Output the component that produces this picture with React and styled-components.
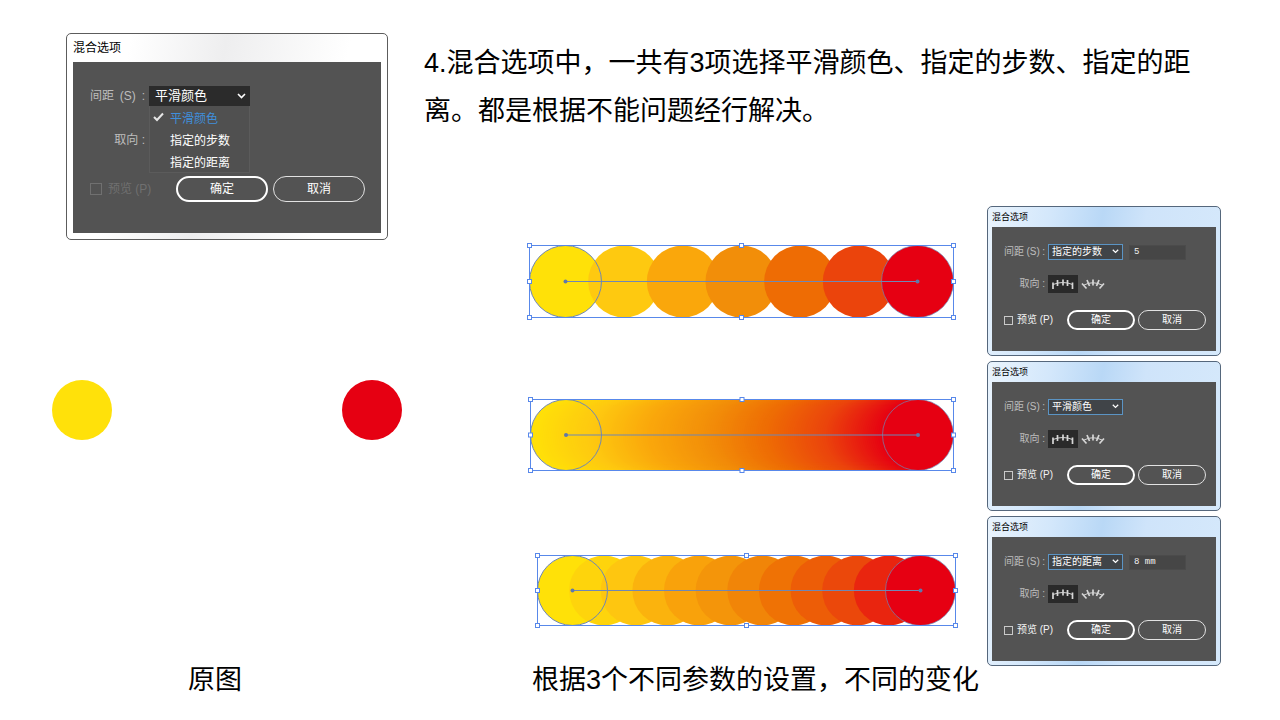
import { useId } from 'react';
import styled, { createGlobalStyle, ThemeProvider } from 'styled-components';

const GlobalStyle = createGlobalStyle`
  * {
    box-sizing: border-box;
  }
  body {
    margin: 0;
    background: #fff;
    color: #000;
    font-family: "Liberation Sans", "Noto Sans CJK SC", sans-serif;
  }
  button, input, select {
    margin: 0;
    font-family: inherit;
  }
`;

const large = {
  font: 12,
  frame: 'linear-gradient(100deg, #fff 0%, #fff 18%, #eeeeef 45%, #fff 80%)',
  frameBorder: '#5c5c5c',
  titleHeight: 28,
  edge: 6,
  body: '24px 10px 31px 17px',
  gaps: [24, 26],
  labelWidth: 55,
  labelGap: 4,
  rowHeight: 20,
  selectWidth: 101,
  selectBg: '#2b2b2b',
  selectBorder: '#2b2b2b',
  checkWidth: 86,
  check: 12,
  checkGap: 6,
  button: [92, 26],
  buttonGap: 5,
};

const small = {
  font: 10,
  frame: 'linear-gradient(100deg, #eaf4fd 0%, #d3e7fb 25%, #b9d8f6 45%, #cfe4fa 62%, #d6e9fb 100%)',
  frameBorder: '#55677c',
  titleHeight: 20,
  edge: 4,
  body: '17px 5px 21px 12px',
  gaps: [14, 16],
  labelWidth: 41,
  labelGap: 3,
  rowHeight: 16,
  selectWidth: 75,
  selectBg: '#404448',
  selectBorder: '#5b94c4',
  checkWidth: 63,
  check: 9,
  checkGap: 4,
  button: [68, 20],
  buttonGap: 3,
};

const Page = styled.main`
  display: grid;
  grid-template-columns: 350px 1fr;
  column-gap: 22px;
  min-height: 100vh;
  padding: 33px 59px 26px 52px;
`;
const Original = styled.section`
  display: flex;
  flex-direction: column;
  align-items: center;
`;
const Results = styled.section`
  display: flex;
  flex-direction: column;
`;
const Intro = styled.p`
  margin: 0 0 71px;
  padding: 6px 20px 0 0;
  font-size: 27px;
  line-height: 48px;
`;
const Caption = styled.p`
  margin: auto 0 0;
  padding: ${props => props.$inset};
  font-size: 27px;
  line-height: 28px;
`;
const ResultList = styled.div`
  display: flex;
  flex-direction: column;
  gap: 5px;
`;
const ResultRow = styled.div`
  display: flex;
  align-items: center;
  justify-content: space-between;
  padding-left: 100px;
`;
const Swatches = styled.div`
  display: flex;
  justify-content: space-between;
  width: 100%;
  margin-top: 140px;
`;
const Swatch = styled.span`
  width: 60px;
  height: 60px;
  border-radius: 50%;
  background: ${props => props.$color};
`;

const Frame = styled.form`
  flex: none;
  width: ${props => (props.theme.font === 12 ? 322 : 234)}px;
  padding: 0 ${props => props.theme.edge}px ${props => props.theme.edge}px;
  border: 1px solid ${props => props.theme.frameBorder};
  border-radius: 5px;
  background: ${props => props.theme.frame};
  font-size: ${props => props.theme.font}px;
`;
const TitleBar = styled.h2`
  margin: 0;
  font-size: ${props => (props.theme.font === 12 ? 12 : 9)}px;
  font-weight: normal;
  line-height: ${props => props.theme.titleHeight}px;
`;
const Body = styled.div`
  padding: ${props => props.theme.body};
  background: #535353;
  color: #f2f2f2;
`;
const Row = styled.div`
  display: flex;
  align-items: center;
  height: ${props => props.$height}px;
  margin-top: ${props => props.$gap || 0}px;
`;
const Label = styled.label`
  display: flex;
  align-items: baseline;
  justify-content: ${props => (props.$spread ? 'space-between' : 'flex-end')};
  width: ${props => props.theme.labelWidth}px;
  margin-right: ${props => props.theme.labelGap}px;
  color: #bdbdbd;
  line-height: 14px;
  white-space: pre;
`;
const SelectWrap = styled.div`
  position: relative;
  width: ${props => props.theme.selectWidth}px;
  height: ${props => props.theme.rowHeight}px;
`;
const Select = styled.select`
  display: block;
  width: 100%;
  height: 100%;
  padding: 0 0 0 ${props => (props.theme.font === 12 ? 5 : 3)}px;
  appearance: none;
  border: 1px solid ${props => props.theme.selectBorder};
  border-radius: 0;
  background: ${props => props.theme.selectBg};
  color: #fff;
  font-size: ${props => (props.theme.font === 12 ? 13 : 10)}px;
  line-height: 14px;
`;
const Chevron = styled.svg`
  position: absolute;
  top: 50%;
  right: 4px;
  width: ${props => (props.theme.font === 12 ? 9 : 7)}px;
  margin-top: -3px;
  pointer-events: none;
`;
const Menu = styled.ul`
  position: absolute;
  top: 100%;
  left: 0;
  width: 100%;
  margin: 0;
  padding: 0;
  border: 1px solid #5b5b5b;
  border-top: 0;
  background: #505050;
  list-style: none;
`;
const MenuItem = styled.li`
  display: flex;
  align-items: center;
  gap: 6px;
  height: 22px;
  padding-left: 3px;
  color: ${props => (props.$active ? '#3f8fdc' : '#fff')};
`;
const Tick = styled.svg`
  flex: none;
  width: 11px;
  height: 10px;
  visibility: ${props => (props.$shown ? 'visible' : 'hidden')};
`;
const NumberField = styled.input`
  width: 57px;
  height: 15px;
  margin-left: 6px;
  padding: 0 0 0 4px;
  border: 1px solid #4b4b4b;
  border-radius: 0;
  background: #464646;
  color: #f2f2f2;
  && {
    font-family: "Liberation Mono", monospace;
  }
  font-size: 9px;
`;
const OrientButton = styled.button`
  width: 30px;
  height: 18px;
  padding: 0;
  border: 0;
  background: ${props => (props.$on ? '#2a2a2a' : 'transparent')};
  svg {
    display: block;
    margin: 0 auto;
  }
`;
const Preview = styled.label`
  display: flex;
  flex: none;
  align-items: center;
  gap: ${props => props.theme.checkGap}px;
  width: ${props => props.theme.checkWidth}px;
  color: ${props => (props.$off ? '#707070' : '#f2f2f2')};
  line-height: 14px;
  white-space: pre;
`;
const Checkbox = styled.input`
  flex: none;
  width: ${props => props.theme.check}px;
  height: ${props => props.theme.check}px;
  appearance: none;
  border: 1px solid ${props => (props.disabled ? '#707070' : '#c9c9c9')};
`;
const PillButton = styled.button`
  flex: none;
  width: ${props => props.theme.button[0]}px;
  height: ${props => props.theme.button[1]}px;
  margin-right: ${props => props.theme.buttonGap}px;
  padding: 0;
  border: ${props => (props.$primary ? 2 : 1)}px solid ${props => (props.$primary ? '#fff' : '#e2e2e2')};
  border-radius: 14px;
  background: transparent;
  color: #fff;
  font-size: inherit;
  line-height: 14px;
`;
const Art = styled.svg`
  display: block;
  flex: none;
  width: 436px;
  height: 80px;
`;

const modes = ['平滑颜色', '指定的步数', '指定的距离'];

function AlignPageIcon() {
  return (
    <svg width="24" height="12" viewBox="0 0 24 12" fill="none" stroke="#d6d6d6" strokeWidth="1.7">
      <path d="M2 4.500v6.500M6.500 2v6M12 1.500v6M16.500 2v6M21.500 4.500v6.500" />
      <path d="M2 6.500Q12 2.500 21.500 6.500" strokeWidth="1" />
    </svg>
  );
}

function AlignPathIcon() {
  return (
    <svg width="24" height="12" viewBox="0 0 24 12" fill="none" stroke="#d6d6d6" strokeWidth="1.7">
      <path d="M1 5.500l4.500 5M6 2l2.500 6M12 1.500v6M18 2l-2.500 6M23 5.500l-4.500 5" />
      <path d="M3 7Q12 2.500 21 7" strokeWidth="1" />
    </svg>
  );
}

function BlendDialog({ size, mode, value, open }) {
  const id = useId();
  return (
    <ThemeProvider theme={size}>
      <Frame onSubmit={e => e.preventDefault()}>
        <TitleBar>混合选项</TitleBar>
        <Body>
          <Row $height={size.rowHeight}>
            <Label htmlFor={`${id}mode`} $spread>
              <span>间距</span>
              <span>(S)</span>
              <span>:</span>
            </Label>
            <SelectWrap>
              <Select id={`${id}mode`} defaultValue={mode}>
                {modes.map(item => (
                  <option key={item}>{item}</option>
                ))}
              </Select>
              <Chevron viewBox="0 0 9 6" fill="none" stroke="#fff" strokeWidth="1.6">
                <path d="M1 1l3.500 3.500L8 1" />
              </Chevron>
              {open ? (
                <Menu role="listbox">
                  {modes.map(item => (
                    <MenuItem key={item} role="option" aria-selected={item === mode} $active={item === mode}>
                      <Tick $shown={item === mode} viewBox="0 0 11 10" fill="none" stroke="#e6e6e6" strokeWidth="2">
                        <path d="M1 5l3 3 6-6.500" />
                      </Tick>
                      {item}
                    </MenuItem>
                  ))}
                </Menu>
              ) : null}
            </SelectWrap>
            {value ? <NumberField aria-label={mode} defaultValue={value} /> : null}
          </Row>
          <Row $height={20} $gap={size.gaps[0]}>
            <Label as="span">取向 :</Label>
            {!open ? (
              <>
                <OrientButton type="button" aria-label="对齐页面" $on>
                  <AlignPageIcon />
                </OrientButton>
                <OrientButton type="button" aria-label="对齐路径">
                  <AlignPathIcon />
                </OrientButton>
              </>
            ) : null}
          </Row>
          <Row $height={size.button[1]} $gap={size.gaps[1]}>
            <Preview $off={open}>
              <Checkbox type="checkbox" disabled={open} />
              预览 (P)
            </Preview>
            <PillButton type="submit" $primary>确定</PillButton>
            <PillButton type="button">取消</PillButton>
          </Row>
        </Body>
      </Frame>
    </ThemeProvider>
  );
}

const ramp = [
  [255, 225, 8],
  [254, 201, 16],
  [250, 167, 11],
  [242, 142, 9],
  [238, 108, 4],
  [235, 68, 12],
  [230, 0, 18],
];

function rampColor(t) {
  const pos = t * (ramp.length - 1);
  const i = Math.min(Math.floor(pos), ramp.length - 2);
  const mix = ramp[i].map((c, n) => Math.round(c + (ramp[i + 1][n] - c) * (pos - i)));
  return `rgb(${mix.join(',')})`;
}

// from / to are the centres of the two key circles
function Blend({ count, from, to, r, cy, label }) {
  const left = from - r;
  const right = to + r;
  const top = cy - r;
  const bottom = cy + r;
  const mid = (left + right) / 2;
  const handles = [
    [left, top], [mid, top], [right, top],
    [left, cy], [right, cy],
    [left, bottom], [mid, bottom], [right, bottom],
  ];
  return (
    <Art viewBox="0 0 436 80" role="img" aria-label={label}>
      {Array.from({ length: count }, (_, i) => {
        const t = i / (count - 1);
        return <circle key={i} cx={from + (to - from) * t} cy={cy} r={r} fill={rampColor(t)} />;
      })}
      <g fill="none" stroke="#6f87b5">
        <circle cx={from} cy={cy} r={r} />
        <circle cx={to} cy={cy} r={r} strokeOpacity="0.7" />
        <path d={`M${from} ${cy}H${to}`} />
      </g>
      <rect x={left} y={top} width={right - left} height={r * 2} fill="none" stroke="#5888ea" />
      <g fill="#5f78ab">
        <circle cx={from} cy={cy} r="2" />
        <circle cx={to} cy={cy} r="2" />
      </g>
      <g fill="#fff" stroke="#5888ea">
        {handles.map(([x, y]) => (
          <rect key={`${x}-${y}`} x={x - 2} y={y - 2} width="4" height="4" />
        ))}
      </g>
    </Art>
  );
}

const results = [
  { mode: '指定的步数', value: '5', count: 7, from: 41.5, to: 393.5, r: 36, cy: 40.5 },
  { mode: '平滑颜色', count: 176, from: 42, to: 394, r: 35.5, cy: 39 },
  { mode: '指定的距离', value: '8 mm', count: 12, from: 48.5, to: 396.5, r: 35, cy: 39.5 },
];

export default function App() {
  return (
    <>
      <GlobalStyle />
      <Page>
        <Original>
          <BlendDialog size={large} mode="平滑颜色" open />
          <Swatches>
            <Swatch $color="#ffe10a" />
            <Swatch $color="#e60012" />
          </Swatches>
          <Caption $inset="0 24px 0 0">原图</Caption>
        </Original>
        <Results>
          <Intro>
            4.混合选项中，一共有3项选择平滑颜色、指定的步数、指定的距离。都是根据不能问题经行解决。
          </Intro>
          <ResultList>
            {results.map(({ mode, value, ...art }) => (
              <ResultRow key={mode}>
                <Blend {...art} label={mode} />
                <BlendDialog size={small} mode={mode} value={value} />
              </ResultRow>
            ))}
          </ResultList>
          <Caption $inset="0 0 0 108px">根据3个不同参数的设置，不同的变化</Caption>
        </Results>
      </Page>
    </>
  );
}
